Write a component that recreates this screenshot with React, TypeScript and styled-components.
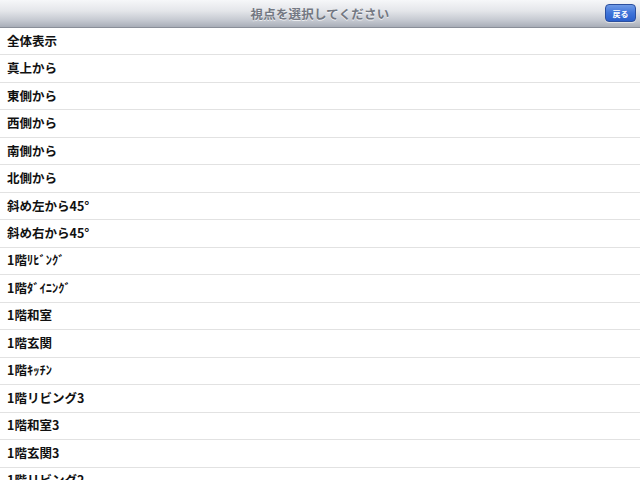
import styled, { createGlobalStyle } from 'styled-components';

const GlobalStyle = createGlobalStyle`
  html, body {
    margin: 0;
    padding: 0;
    background: #ffffff;
    overflow: hidden;
  }
`;

const Screen = styled.div`
  width: 640px;
  height: 480px;
  overflow: hidden;
  display: flex;
  flex-direction: column;
  font-family: 'Noto Sans CJK JP', 'Noto Sans', sans-serif;
`;

const NavBar = styled.header`
  flex: 0 0 27px;
  display: grid;
  grid-template-columns: 1fr auto 1fr;
  align-items: center;
  padding: 0 4px 0 4px;
  background: linear-gradient(#f6f7f9 0%, #e4e6ea 40%, #c5c9d1 75%, #a9aeb8 100%);
  border-bottom: 1px solid #8a8f99;
`;

const NavTitle = styled.h1`
  grid-column: 2;
  margin: 0 0 1px;
  font-size: 12.5px;
  font-weight: 700;
  color: #737882;
  text-shadow: 0 1px 0 rgba(255, 255, 255, 0.7);
  letter-spacing: 0.2px;
`;

const BackButton = styled.button`
  grid-column: 3;
  justify-self: end;
  width: 31px;
  height: 18px;
  margin-top: -1px;
  padding: 0;
  border: 1px solid #2b4f9e;
  border-radius: 4px;
  background: linear-gradient(#6f9ae6 0%, #3f74d9 50%, #2a5fcc 100%);
  color: #ffffff;
  font-family: inherit;
  font-size: 8px;
  font-weight: 700;
  box-shadow: 0 1px 0 rgba(255, 255, 255, 0.5);
`;

const List = styled.ul`
  list-style: none;
  margin: 0;
  padding: 0;
`;

const Row = styled.li`
  height: 27.47px;
  box-sizing: border-box;
  display: flex;
  align-items: center;
  padding: 0 0 2px 7px;
  border-bottom: 1px solid #e2e2e2;
  font-size: 12.5px;
  font-weight: 700;
  color: #111111;
`;

const items = [
  '全体表示',
  '真上から',
  '東側から',
  '西側から',
  '南側から',
  '北側から',
  '斜め左から45°',
  '斜め右から45°',
  '1階ﾘﾋﾞﾝｸﾞ',
  '1階ﾀﾞｲﾆﾝｸﾞ',
  '1階和室',
  '1階玄関',
  '1階ｷｯﾁﾝ',
  '1階リビング3',
  '1階和室3',
  '1階玄関3',
  '1階リビング2',
];

export default function App() {
  return (
    <Screen>
      <GlobalStyle />
      <NavBar>
        <NavTitle>視点を選択してください</NavTitle>
        <BackButton>戻る</BackButton>
      </NavBar>
      <List>
        {items.map((label) => (
          <Row key={label}>{label}</Row>
        ))}
      </List>
    </Screen>
  );
}
